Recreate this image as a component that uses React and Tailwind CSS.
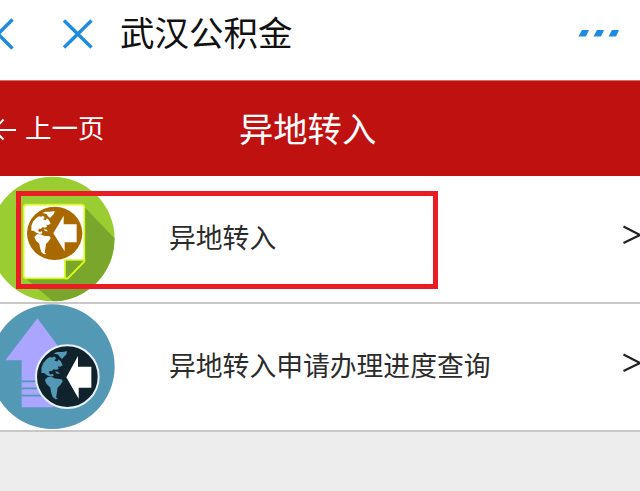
import React from "react";

const GlobeLand = () => (
  <>
    <path d="M94 182 L94 168 L99 155 L108 145 L117 139 L124 140 L129 137 L134 143 L129 148 L137 151 L141 145 L147 151 L152 161 L145 165 L139 164 L141 171 L134 173 L127 172 L122 177 L117 176 L114 182 L119 186 L126 184 L127 190 L119 192 L109 188 L101 182 Z" />
    <path d="M127 129 L136 125 L150 125 L164 123 L162 131 L155 139 L150 144 L144 139 L139 132 Z" />
    <path d="M103 201 L111 193 L122 193 L131 197 L149 199 L152 204 L146 214 L138 222 L136 236 L134 248 L139 252 L132 253 L124 246 L120 233 L118 221 L108 212 Z" />
    <path d="M131 177 L140 179 L144 184 L135 183 Z" />
  </>
);

const TransferIcon = () => (
  <svg className="block h-[126px] w-29 shrink-0" viewBox="0 18 348 378">
    <circle cx="157" cy="207" r="187" fill="#9acd32" />
    <path
      d="M254 112 L343 205 A187 187 0 0 1 168 394 L158 393 L78 326 L195 322 Z"
      fill="#79a62b"
    />
    <path
      d="M79 104 H245 Q253 104 253 112 V274 L203 325 H79 Q71 325 71 317 V112 Q71 104 79 104 Z"
      fill="#fff"
      stroke="#d9fa1e"
      strokeWidth="5"
    />
    <path
      d="M195 325 V270 H253 V274 L203 325 Z"
      fill="#79a62b"
      stroke="#d9fa1e"
      strokeWidth="5"
      strokeLinejoin="round"
    />
    <ellipse cx="164" cy="190" rx="83" ry="80" fill="#a96900" />
    <g fill="#fff">
      <GlobeLand />
      <path d="M160 190 L191 137 V163 H230 V217 H194 V244 Z" />
    </g>
  </svg>
);

const ProgressIcon = () => (
  <svg className="block h-[126px] w-29 shrink-0" viewBox="0 13 348 378">
    <circle cx="157" cy="201" r="187" fill="#5398b5" />
    <path
      d="M112 56 L206 182 H160 V323 H65 V182 H16 Z"
      fill="#aaa5ff"
    />
    <path d="M65 245 H160 M65 266 H160 M65 288 H160" stroke="#5398b5" strokeWidth="5" />
    <circle cx="202" cy="231" r="94" fill="#10232d" stroke="#e8f1fa" strokeWidth="6" />
    <g fill="#5398b5" transform="translate(21 18) scale(1.1 1.11)">
      <GlobeLand />
    </g>
    <path d="M199 233 L234 169 V201 H274 V264 H236 V297 Z" fill="#fff" />
  </svg>
);

const items = [
  { id: 1, title: "异地转入", icon: TransferIcon },
  { id: 2, title: "异地转入申请办理进度查询", icon: ProgressIcon },
];

export default function App() {
  return (
    <div className="relative h-[491px] w-full overflow-hidden bg-[#ededed] font-['Noto_Sans_CJK_SC',sans-serif]">
      {/** browser bar */}
      <header className="flex h-20 items-center bg-white pb-3">
        <svg className="h-8 w-4 shrink-0" viewBox="0 0 16 32" fill="none">
          <path d="M12.5 1.5 L-2 16 L12.5 30.5" stroke="#1d8ce0" strokeWidth="3.4" />
        </svg>
        <svg className="ml-[46px] h-8 w-8 shrink-0" viewBox="0 0 32 32" fill="none">
          <path d="M2 2.5 L29.5 29.5 M29.5 2.5 L2 29.5" stroke="#1d8ce0" strokeWidth="3.4" />
        </svg>
        <h1 className="mb-1.5 ml-[26px] text-[34.5px] leading-none text-[#111]">武汉公积金</h1>
        <svg className="mt-[-2px] mr-5 ml-auto h-2 w-[42px]" viewBox="0 0 42 8" fill="#1d8ce0">
          <path d="M4 1 H11 L8 7.5 H0.5 Z" />
          <path d="M19 1 H26 L23 7.5 H15.5 Z" />
          <path d="M34 1 H41 L38 7.5 H30.5 Z" />
        </svg>
      </header>

      <nav className="flex h-24 items-center border-t border-[#d4716b] bg-[#bf1210] pb-0.5 text-white">
        <button className="flex w-[239px] items-center">
          <svg className="mt-0.5 h-6 w-[25px]" viewBox="0 0 25 24" fill="none">
            <path d="M3.5 2.5 L-6 13 L3.5 22.5 M-6 13 H16" stroke="#fff" strokeWidth="2" />
          </svg>
          <span className="text-[26.5px] leading-none">上一页</span>
        </button>
        <h2 className="text-[34.3px] leading-none">异地转入</h2>
      </nav>

      <ul>
        {items.map(({ id, title, icon: Icon }) => (
          <li
            key={id}
            className="flex h-32 items-center border-b-2 border-[#c8c8c8] bg-white text-[#2c2c2c]"
          >
            <Icon />
            <span className="mb-1 ml-[53px] text-[26.8px] leading-none">{title}</span>
            <svg className="mb-2 ml-auto h-5 w-[18px]" viewBox="0 0 18 20" fill="none">
              <path d="M1.5 1.5 L18 10 L1.5 18" stroke="#222" strokeWidth="2.2" />
            </svg>
          </li>
        ))}
      </ul>

      {/** highlight around the first entry */}
      <div className="absolute top-[191px] left-4 h-[98px] w-[422px] border-5 border-[#ea1c24]"></div>
    </div>
  );
}
